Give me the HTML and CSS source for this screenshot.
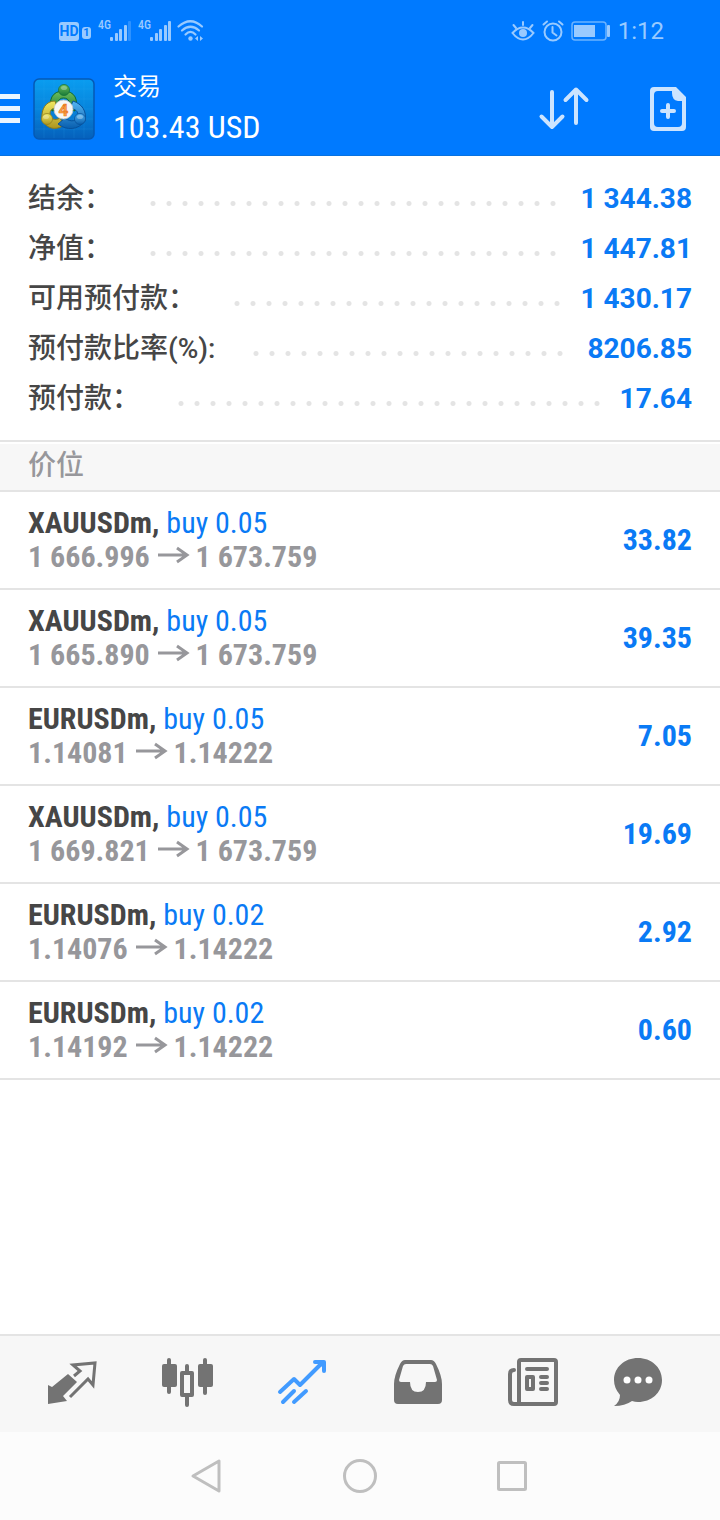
FILE: index.html
```
<!DOCTYPE html>
<html lang="zh-CN">
<head>
    <meta charset="UTF-8">
    <meta name="viewport" content="width=device-width, initial-scale=1.0">
    <title>交易</title>
    <link rel="stylesheet" href="styles.css">
</head>
<body>

    <div class="top">
        <div class="status-bar">
            <div class="status-left">
                <span class="hd">HD</span>
                <span class="sim">1</span>
                <span class="network">4G</span>
                <svg class="signal" width="22" height="22" viewBox="0 0 22 22" fill="currentColor">
                    <rect x="0" y="17" width="3" height="4" rx="1"/>
                    <rect x="5" y="13" width="3" height="8" rx="1"/>
                    <rect x="9" y="9" width="3" height="12" rx="1"/>
                    <rect x="14" y="5" width="3" height="16" rx="1"/>
                    <rect x="18" y="1" width="3" height="20" rx="1" opacity="0.3"/>
                </svg>
                <span class="network">4G</span>
                <svg class="signal" width="22" height="22" viewBox="0 0 22 22" fill="currentColor">
                    <rect x="0" y="17" width="3" height="4" rx="1"/>
                    <rect x="5" y="13" width="3" height="8" rx="1"/>
                    <rect x="9" y="9" width="3" height="12" rx="1"/>
                    <rect x="14" y="5" width="3" height="16" rx="1"/>
                    <rect x="18" y="1" width="3" height="20" rx="1"/>
                </svg>
                <svg class="wifi" width="26" height="22" viewBox="0 0 26 22" fill="none" stroke="currentColor" stroke-width="2.2" stroke-linecap="round">
                    <path d="M0.500 6.500Q12.500 -4 24 6.500"/>
                    <path d="M4 10.500Q12.500 3 21 10.500"/>
                    <path d="M7.500 14.500Q12.500 9.500 17.500 14.500"/>
                    <circle cx="12.500" cy="18.500" r="2.200" fill="currentColor" stroke="none"/>
                    <path d="M20 16v5l-3-2.500zM22 16v5l3-2.500z" fill="currentColor" stroke="none"/>
                </svg>
            </div>
            <div class="status-right">
                <svg width="24" height="22" viewBox="0 0 24 22" fill="none" stroke="currentColor" stroke-width="2" stroke-linecap="round">
                    <path d="M1.500 13Q6.500 7.500 12 7.500T22.500 13Q17.500 19.500 12 19.500T1.500 13Z"/>
                    <circle cx="12" cy="13" r="4" fill="currentColor" stroke="none"/>
                    <path d="M12 2v3M2.500 5l2.500 3M21.500 5l-2.500 3"/>
                </svg>
                <svg width="22" height="22" viewBox="0 0 22 22" fill="none" stroke="currentColor" stroke-width="2" stroke-linecap="round" stroke-linejoin="round">
                    <circle cx="11" cy="12" r="8.500"/>
                    <path d="M10.500 7v5.500l4 3M1.500 4.500l3.500-3M20.500 4.500l-3.500-3"/>
                </svg>
                <svg class="battery" width="40" height="22" viewBox="0 0 40 22">
                    <rect x="1" y="2" width="34" height="18" rx="3" fill="none" stroke="currentColor" stroke-width="1.500" opacity="0.7"/>
                    <rect x="3" y="5" width="21" height="12" fill="currentColor"/>
                    <rect x="36" y="5" width="3" height="12" rx="1" fill="currentColor"/>
                </svg>
                <span class="clock">1:12</span>
            </div>
        </div>

        <header class="header">
            <button class="menu" aria-label="菜单"><span></span><span></span><span></span></button>
            <svg class="logo" width="62" height="62" viewBox="-1 -1 62 62">
                <defs>
                    <linearGradient id="sky" x1="0" y1="0" x2="0" y2="1">
                        <stop offset="0" stop-color="#0a9df0"/>
                        <stop offset="0.5" stop-color="#0684dc"/>
                        <stop offset="1" stop-color="#0560bb"/>
                    </linearGradient>
                    <linearGradient id="green" x1="0" y1="0" x2="0" y2="1">
                        <stop offset="0" stop-color="#6fbf5c"/>
                        <stop offset="1" stop-color="#187a38"/>
                    </linearGradient>
                    <linearGradient id="yellow" x1="0" y1="0" x2="0" y2="1">
                        <stop offset="0" stop-color="#f0e860"/>
                        <stop offset="1" stop-color="#ad9620"/>
                    </linearGradient>
                    <linearGradient id="blue" x1="0" y1="0" x2="0" y2="1">
                        <stop offset="0" stop-color="#55b5f2"/>
                        <stop offset="1" stop-color="#085eae"/>
                    </linearGradient>
                </defs>
                <rect x="0" y="0" width="60" height="60" rx="5" fill="url(#sky)" stroke="#0559b5" stroke-width="1.500"/>
                <path d="M10 1v58M20 1v58M30 1v58M40 1v58M50 1v58M1 10h58M1 20h58M1 30h58M1 40h58M1 50h58" stroke="#3fb3f5" stroke-width="0.500" opacity="0.3"/>
                <path d="M18 32C14 21 18 12 29.500 12S45 21 41 32L34 30C37 24 35 19 29.500 19S23 24 26 30Z" fill="url(#green)" stroke="#10692f"/>
                <path d="M21 22C12 22 7 30 8 40C12 50 22 52 30 46L26 39C21 42 16 40 16 35C16 31 18 29 23 29Z" fill="url(#yellow)" stroke="#8b7b1b"/>
                <path d="M39 22C48 25 53 32 51 42C44 51 33 52 24 45L31 39C37 44 44 42 44 36C44 32 41 30 36 29Z" fill="url(#blue)" stroke="#07529c"/>
                <circle cx="30" cy="11" r="5.500" fill="url(#green)" stroke="#17733a" stroke-width="0.800"/>
                <circle cx="13" cy="40" r="5.500" fill="url(#yellow)" stroke="#93821e" stroke-width="0.800"/>
                <circle cx="46" cy="40" r="5.500" fill="url(#blue)" stroke="#07529c" stroke-width="0.800"/>
                <ellipse cx="30" cy="9" rx="3" ry="2" fill="#fff" opacity="0.3"/>
                <ellipse cx="12" cy="38" rx="3" ry="2" fill="#fff" opacity="0.3"/>
                <ellipse cx="46" cy="38" rx="3" ry="2" fill="#fff" opacity="0.3"/>
                <circle cx="29.500" cy="30.500" r="9.500" fill="#f7f7f5" stroke="#c9cbc5" stroke-width="0.800"/>
                <text class="logo-digit" x="29.500" y="36.500" text-anchor="middle">4</text>
            </svg>
            <div class="account">
                <h1>交易</h1>
                <div class="total">103.43 USD</div>
            </div>
            <button class="action" aria-label="排序">
                <svg width="56" height="48" viewBox="0 0 56 48" fill="none" stroke="currentColor" stroke-width="4" stroke-linecap="round" stroke-linejoin="round">
                    <path d="M16 7v35M5.500 31.500L16 42l10.500-10.500"/>
                    <path d="M40 38V4.500M29.500 15L40 4.500l10.500 10.500"/>
                </svg>
            </button>
            <button class="action" aria-label="新订单">
                <svg width="40" height="48" viewBox="0 0 40 48">
                    <path d="M6 2H28L38 12V42Q38 46 34 46H6Q2 46 2 42V6Q2 2 6 2ZM10 6Q6 6 6 10V38Q6 42 10 42H30Q34 42 34 38V16H30Q24 15 24 8V6Z" fill="currentColor" fill-rule="evenodd"/>
                    <path d="M20 20v12M14 26h12" fill="none" stroke="currentColor" stroke-width="4" stroke-linecap="round"/>
                </svg>
            </button>
        </header>
    </div>

    <main>
        <dl class="summary">
            <div class="summary-row"><dt>结余：</dt><dd>1 344.38</dd></div>
            <div class="summary-row"><dt>净值：</dt><dd>1 447.81</dd></div>
            <div class="summary-row"><dt>可用预付款：</dt><dd>1 430.17</dd></div>
            <div class="summary-row"><dt>预付款比率(%):</dt><dd>8206.85</dd></div>
            <div class="summary-row"><dt>预付款：</dt><dd>17.64</dd></div>
        </dl>

        <h2 class="section-title">价位</h2>

        <ul class="positions">
            <li>
                <div class="position">
                    <div class="symbol">XAUUSDm, <span class="order">buy 0.05</span></div>
                    <div class="prices">1 666.996 <svg class="arrow" width="32" height="20" viewBox="0 0 32 20"><path d="M1 8h29M20 1l10 7l-10 7"/></svg> 1 673.759</div>
                </div>
                <div class="profit">33.82</div>
            </li>
            <li>
                <div class="position">
                    <div class="symbol">XAUUSDm, <span class="order">buy 0.05</span></div>
                    <div class="prices">1 665.890 <svg class="arrow" width="32" height="20" viewBox="0 0 32 20"><path d="M1 8h29M20 1l10 7l-10 7"/></svg> 1 673.759</div>
                </div>
                <div class="profit">39.35</div>
            </li>
            <li>
                <div class="position">
                    <div class="symbol">EURUSDm, <span class="order">buy 0.05</span></div>
                    <div class="prices">1.14081 <svg class="arrow" width="32" height="20" viewBox="0 0 32 20"><path d="M1 8h29M20 1l10 7l-10 7"/></svg> 1.14222</div>
                </div>
                <div class="profit">7.05</div>
            </li>
            <li>
                <div class="position">
                    <div class="symbol">XAUUSDm, <span class="order">buy 0.05</span></div>
                    <div class="prices">1 669.821 <svg class="arrow" width="32" height="20" viewBox="0 0 32 20"><path d="M1 8h29M20 1l10 7l-10 7"/></svg> 1 673.759</div>
                </div>
                <div class="profit">19.69</div>
            </li>
            <li>
                <div class="position">
                    <div class="symbol">EURUSDm, <span class="order">buy 0.02</span></div>
                    <div class="prices">1.14076 <svg class="arrow" width="32" height="20" viewBox="0 0 32 20"><path d="M1 8h29M20 1l10 7l-10 7"/></svg> 1.14222</div>
                </div>
                <div class="profit">2.92</div>
            </li>
            <li>
                <div class="position">
                    <div class="symbol">EURUSDm, <span class="order">buy 0.02</span></div>
                    <div class="prices">1.14192 <svg class="arrow" width="32" height="20" viewBox="0 0 32 20"><path d="M1 8h29M20 1l10 7l-10 7"/></svg> 1.14222</div>
                </div>
                <div class="profit">0.60</div>
            </li>
        </ul>
    </main>

    <nav class="tabs">
        <a href="#quotes" aria-label="行情">
            <svg width="60" height="56" viewBox="0 0 60 56">
                <path d="M6 25L10 27L26 14L35 22L21 36L25 41L6 44Z" fill="currentColor"/>
                <path d="M32 16L38 11L31 5L53 3L51 25L46 19L28 37" fill="none" stroke="currentColor" stroke-width="3"/>
            </svg>
        </a>
        <a href="#charts" aria-label="图表">
            <svg width="60" height="56" viewBox="0 0 60 56" fill="currentColor">
                <rect x="5" y="4" width="15" height="23" rx="2"/>
                <rect x="10" y="-2" width="4" height="36" rx="2"/>
                <rect x="41" y="4" width="15" height="23" rx="2"/>
                <rect x="46" y="-2" width="4" height="37" rx="2"/>
                <rect x="28" y="4" width="4" height="9" rx="2"/>
                <rect x="28" y="35" width="4" height="12" rx="2"/>
                <path d="M25 11h10q2 0 2 2v22q0 2-2 2H25q-2 0-2-2V13q0-2 2-2zM27 15v18h6V15z" fill-rule="evenodd"/>
            </svg>
        </a>
        <a class="active" href="#trade" aria-label="交易">
            <svg width="60" height="56" viewBox="0 0 60 56" fill="none" stroke="currentColor" stroke-width="4" stroke-linecap="round" stroke-linejoin="round">
                <path d="M8 32L22 19L28 25L50 3"/>
                <path d="M43 2h9v9"/>
                <path d="M46 2h6v6z" fill="currentColor" stroke-width="1"/>
                <path d="M11 42L22 31M22 42L34 31"/>
            </svg>
        </a>
        <a href="#history" aria-label="历史">
            <svg width="60" height="56" viewBox="0 0 60 56">
                <path d="M17 0H43Q46 0 48 4Q54 16 54 24V40Q54 44 50 44H10Q6 44 6 40V24Q6 16 12 4Q14 0 17 0ZM18 4Q16 4 15 6L11 20Q11 22 13 22H22Q22 32 30 32T38 22H47Q49 22 49 20L45 6Q44 4 42 4Z" fill="currentColor" fill-rule="evenodd"/>
            </svg>
        </a>
        <a href="#news" aria-label="新闻">
            <svg width="60" height="56" viewBox="0 0 60 56" fill="none" stroke="currentColor" stroke-width="4" stroke-linecap="round" stroke-linejoin="round">
                <rect x="16" y="0" width="37" height="44" rx="2"/>
                <path d="M11 10Q7 10 7 14V40Q7 44 11 44H18"/>
                <path d="M24 9h20M38 17h6M38 23h6M38 29h6"/>
                <rect x="24" y="17" width="6" height="12"/>
            </svg>
        </a>
        <a href="#messages" aria-label="消息">
            <svg width="60" height="56" viewBox="0 0 60 56">
                <path d="M20-2C33-2 44 7 44 20S33 42 20 42Q17 42 14 41Q7 46-4 46Q2 42 2 35Q-4 28-4 20C-4 7 7-2 20-2Z" fill="currentColor"/>
                <circle cx="9" cy="20" r="3.500" fill="#fff"/>
                <circle cx="20" cy="20" r="3.500" fill="#fff"/>
                <circle cx="31" cy="20" r="3.500" fill="#fff"/>
            </svg>
        </a>
    </nav>

    <div class="system-nav">
        <button aria-label="返回">
            <svg width="36" height="36" viewBox="0 0 36 36"><path d="M30 3v30L4 18z"/></svg>
        </button>
        <button aria-label="主屏幕">
            <svg width="36" height="36" viewBox="0 0 36 36"><circle cx="18" cy="18" r="15.500"/></svg>
        </button>
        <button aria-label="最近任务">
            <svg width="36" height="36" viewBox="0 0 36 36"><rect x="3.500" y="4.500" width="27" height="27" rx="1"/></svg>
        </button>
    </div>

</body>
</html>
```
FILE: styles.css
```
* {
    box-sizing: border-box;
}

body {
    margin: 0;
    min-height: 100vh;
    display: flex;
    flex-direction: column;
    background-color: #fff;
    color: #464646;
    font-family: Roboto, "Noto Sans CJK SC", sans-serif;
}

main {
    flex: 1;
}

h1, h2, dl, dd, ul {
    margin: 0;
    padding: 0;
}

button {
    padding: 0;
    border: none;
    background: none;
    color: inherit;
    cursor: pointer;
}

svg {
    display: block;
    overflow: visible;
}

.top {
    background-color: #007aff;
    border-bottom: 1px solid #0872e0;
    color: #fff;
}

/* Status bar */
.status-bar {
    display: flex;
    justify-content: space-between;
    align-items: center;
    height: 62px;
    padding: 0 56px 0 59px;
    color: #99caff;
}

.status-left, .status-right {
    display: flex;
    align-items: center;
}

.status-right {
    gap: 7px;
}

.hd, .sim {
    background-color: #99caff;
    color: #007aff;
    border-radius: 3px;
    font-weight: bold;
    text-align: center;
}

.hd {
    width: 20px;
    font-size: 14px;
    line-height: 19px;
}

.sim {
    width: 9px;
    margin: 4px 7px 0 3px;
    font-size: 11px;
    line-height: 12px;
}

.network {
    align-self: flex-start;
    width: 12px;
    font-family: "Roboto Condensed", "Liberation Sans Narrow", Roboto, sans-serif;
    font-size: 12px;
    line-height: 10px;
    font-weight: 500;
}

.signal {
    margin-right: 6px;
}

.clock {
    font-size: 24px;
    line-height: 28px;
}

/* Header */
.header {
    display: flex;
    align-items: center;
    height: 93px;
    padding-right: 32px;
}

.menu {
    display: flex;
    flex-direction: column;
    gap: 7px;
    width: 20px;
    margin-right: 13px;
}

.menu span {
    height: 5px;
    background-color: #ebf5ff;
}

.logo-digit {
    fill: #f9a64a;
    stroke: #e9741c;
    stroke-width: 0.6;
    font-size: 17px;
    font-weight: bold;
}

.account {
    flex: 1;
    margin-left: 18px;
}

h1 {
    font-size: 24px;
    line-height: 36px;
    font-weight: normal;
}

.total {
    font-family: "Roboto Condensed", "Liberation Sans Narrow", Roboto, sans-serif;
    font-size: 32px;
    line-height: 44px;
}

.action {
    margin-left: 56px;
    color: #cce4ff;
}

/* Account summary */
.summary {
    padding: 18px 28px 16px;
    border-bottom: 2px solid #e4e4e4;
}

.summary-row {
    display: flex;
    align-items: center;
    font-size: 28px;
    line-height: 50px;
    font-weight: bold;
}

dt {
    font-weight: 500;
}

/* dotted line between label and value */
.summary-row::after {
    content: "";
    order: 1;
    flex: 1;
    height: 5px;
    margin: 8px 18px 0 38px;
    background: radial-gradient(circle at 3px 50%, #e4e4e4 2px, transparent 3px) repeat-x 0 0 / 16px 5px;
}

dd {
    order: 2;
    color: #0a7af5;
}

.section-title {
    margin-top: 2px;
    padding: 0 28px 2px;
    background-color: #f7f7f7;
    border-bottom: 2px solid #e4e4e4;
    color: #97979b;
    font-size: 28px;
    line-height: 44px;
    font-weight: 500;
}

/* Open positions */
.positions {
    list-style: none;
    font-family: "Roboto Condensed", "Liberation Sans Narrow", Roboto, sans-serif;
    font-size: 30px;
    line-height: 34px;
    font-weight: bold;
}

.positions li {
    display: flex;
    justify-content: space-between;
    align-items: center;
    padding: 14px 28px;
    border-bottom: 2px solid #e4e4e4;
}

.order {
    color: #0a7af5;
    font-weight: normal;
}

.prices {
    color: #97979b;
}

.arrow {
    display: inline-block;
    fill: none;
    stroke: currentColor;
    stroke-width: 3;
}

.profit {
    color: #0a7af5;
}

/* Bottom tabs */
.tabs {
    display: grid;
    grid-template-columns: repeat(6, 1fr);
    padding: 24px 14px 16px;
    background-color: #f7f7f7;
    border-top: 2px solid #e4e4e4;
}

.tabs a {
    display: flex;
    justify-content: center;
    color: #737373;
}

.tabs .active {
    color: #429bff;
}

.system-nav {
    display: flex;
    justify-content: center;
    align-items: center;
    gap: 117px;
    height: 88px;
    background-color: #fcfcfc;
}

.system-nav svg {
    fill: none;
    stroke: #bfbfbf;
    stroke-width: 3;
    stroke-linejoin: round;
}
```
